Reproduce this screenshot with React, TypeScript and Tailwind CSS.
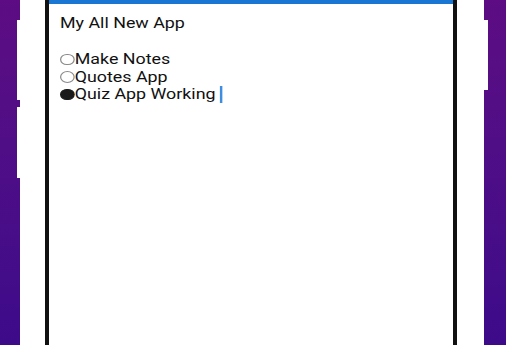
export default function App() {
  const items = [
    { label: "Make Notes", checked: false },
    { label: "Quotes App", checked: false },
    { label: "Quiz App Working", checked: true },
  ]

  return (
    <div className="flex h-[345px] w-[506px] overflow-hidden bg-linear-to-b from-[#5d0c83] to-[#3d0a8a] pl-[20px] pr-[22px]">
      <div className="relative flex flex-1 bg-white pl-[25px] pr-[27px]">
        <div className="absolute left-[-3px] top-[20px] h-[80px] w-[3px] bg-white" />
        <div className="absolute left-[-3px] top-[107px] h-[71px] w-[3px] bg-white" />
        <div className="absolute right-[-4px] top-[20px] h-[70px] w-[4px] bg-white" />

        <div className="flex flex-1 flex-col border-x-4 border-[#111]">
          <div className="h-[4px] bg-[#1976d2]" />
          <div className="flex-1 bg-white pl-[11px] pt-[11px]">
            <div className="origin-left scale-x-[1.23] font-['Roboto',sans-serif] text-[14.5px] leading-[17.5px] text-[#111]">
              <div>My All New App</div>
              <div className="h-[18.5px]" />
              {items.map((item) => (
                <div key={item.label} className="flex items-center">
                  <span
                    className={`mb-[1px] inline-block h-[11.5px] w-[12px] shrink-0 rounded-full border ${
                      item.checked
                        ? "border-[#1a1a1a] bg-[#1a1a1a]"
                        : "border-[#8a8a8a] bg-white"
                    }`}
                  />
                  <span>{item.label}</span>
                  {item.checked && (
                    <span className="ml-[4px] inline-block h-[17px] w-[1.5px] bg-[#3d8ee0]" />
                  )}
                </div>
              ))}
            </div>
          </div>
        </div>
      </div>
    </div>
  )
}
